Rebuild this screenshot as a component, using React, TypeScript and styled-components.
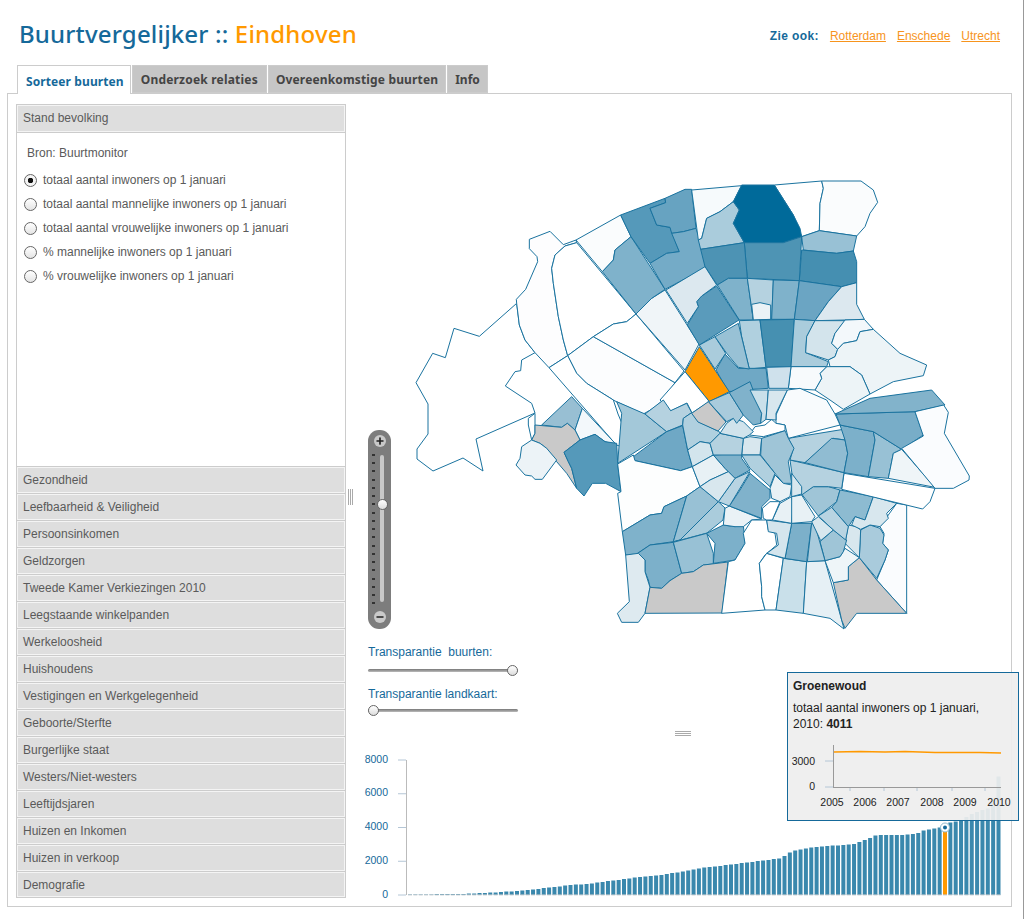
import React from "react";
import styled, { createGlobalStyle } from "styled-components";
import { Minus, Plus } from "lucide-react";

const BLUE = "#15699a";
const ORANGE = "#ff9900";

const GlobalStyle = createGlobalStyle`
  html, body {
    margin: 0;
    background: #fff;
    font-family: "Liberation Sans", Arial, sans-serif;
    font-size: 12px;
    color: #5a5a5a;
  }
`;

const Page = styled.div`
  width: 1023px;
  height: 919px;
  border-right: 1px solid #999;
  overflow: hidden;
`;

const Header = styled.header`
  display: flex;
  align-items: center;
  justify-content: space-between;
  height: 65px;
  padding: 0 23px 0 19px;
  box-sizing: border-box;
`;

const Title = styled.h1`
  margin: 1px 0 0;
  font-family: "Noto Sans", sans-serif;
  font-size: 24px;
  font-weight: 500;
  letter-spacing: 0.17px;
  color: ${BLUE};
`;

const City = styled.span`
  color: ${ORANGE};
`;

const SeeAlso = styled.nav`
  display: flex;
  gap: 11px;
  margin-top: 6px;
  color: ${BLUE};
  font-weight: bold;
`;

const SeeAlsoLabel = styled.span`
  letter-spacing: 0.4px;
`;

const CityLink = styled.a`
  color: #f7941d;
  font-weight: normal;
  text-decoration: underline;
`;

const Tabs = styled.div`
  display: flex;
  gap: 1px;
  height: 29px;
  padding-left: 17px;
  margin-bottom: -1px;
  position: relative;
  z-index: 1;
  font-family: "Noto Sans", sans-serif;
  font-size: 12px;
  font-weight: bold;
`;

const Tab = styled.div<{ $active?: boolean }>`
  display: flex;
  align-items: center;
  padding: ${({ $active }) => ($active ? "2px 6px 0 8px" : "0 8px")};
  box-sizing: border-box;
  height: ${({ $active }) => ($active ? "29px" : "28px")};
  letter-spacing: ${({ $active }) => ($active ? "0.1px" : "0.2px")};
  color: ${({ $active }) => ($active ? BLUE : "#444")};
  background: ${({ $active }) => ($active ? "#fff" : "#c6c6c6")};
  border: 1px solid #ccc;
  border-bottom: ${({ $active }) => ($active ? "none" : "1px solid #ccc")};
  &:nth-child(n + 3) {
    padding: 0 7px;
    letter-spacing: 0.15px;
  }
  &:last-child {
    letter-spacing: 0;
  }
`;

const Panel = styled.main`
  display: flex;
  width: 1005px;
  height: 814px;
  margin-left: 7px;
  padding: 10px 0 0 8px;
  box-sizing: border-box;
  border: 1px solid #ccc;
`;

const Accordion = styled.aside`
  width: 330px;
  flex: none;
`;

const Section = styled.div`
  display: flex;
  align-items: center;
  height: 27px;
  padding: 0 6px;
  box-sizing: border-box;
  border: 1px solid #ccc;
  border-bottom: none;
  background: #dedede;
  box-shadow: inset 0 0 0 1px #f4f4f4;
  &:last-child {
    border-bottom: 1px solid #ccc;
  }
`;

const OpenSection = styled(Section)`
  height: 28px;
  padding-bottom: 2px;
`;

const SectionBody = styled.div`
  height: 334px;
  padding: 13px 0 0 7px;
  box-sizing: border-box;
  border: 1px solid #ccc;
  border-bottom: none;
`;

const Source = styled.div`
  height: 14px;
  margin: 0 0 8px 3px;
  line-height: 14px;
`;

const RadioRow = styled.label`
  display: flex;
  align-items: center;
  gap: 6px;
  height: 24px;
`;

const RadioDot = styled.span<{ $checked?: boolean }>`
  width: 13px;
  height: 13px;
  box-sizing: border-box;
  border-radius: 50%;
  border: 1px solid #666;
  background: ${({ $checked }) =>
    $checked
      ? "radial-gradient(circle, #111 0 2.5px, #f4f4f4 3px)"
      : "linear-gradient(#fff, #e4e4e4)"};
`;

const Splitter = styled.div`
  width: 9px;
  flex: none;
  display: flex;
  align-items: center;
  justify-content: center;
  padding-bottom: 16px;
`;

const VGrip = styled.div`
  width: 5px;
  height: 16px;
  background: repeating-linear-gradient(90deg, #aaa 0 1px, #fff 1px 2px);
`;

const Right = styled.section`
  position: relative;
  flex: 1;
  min-width: 0;
`;

const MapArea = styled.div`
  position: relative;
  height: 541px;
`;

const MapSvg = styled.svg`
  display: block;
`;

const ZoomBar = styled.div`
  position: absolute;
  left: 13px;
  top: 326px;
  width: 23px;
  height: 199px;
  border-radius: 11px;
  background: #7d7d7d;
`;

const ZoomButton = styled.div<{ $bottom?: boolean }>`
  position: absolute;
  left: 6px;
  ${({ $bottom }) => ($bottom ? "bottom: 6px;" : "top: 5px;")}
  display: flex;
  align-items: center;
  justify-content: center;
  width: 12px;
  height: 12px;
  border-radius: 50%;
  background: #c9c9c9;
  color: #222;
`;

const ZoomTicks = styled.div`
  position: absolute;
  left: 4px;
  top: 24px;
  width: 3px;
  height: 150px;
  background: repeating-linear-gradient(#333 0 2px, transparent 2px 8.25px);
`;

const ZoomTrack = styled.div`
  position: absolute;
  left: 12px;
  top: 25px;
  width: 4px;
  height: 147px;
  border-radius: 2px;
  background: #c8c8c8;
`;

const Knob = styled.div`
  position: absolute;
  width: 11px;
  height: 11px;
  box-sizing: border-box;
  border-radius: 50%;
  border: 1px solid #666;
  background: linear-gradient(#fff, #ddd);
`;

const ZoomKnob = styled(Knob)`
  left: 8.5px;
  top: 69px;
`;

const Controls = styled.div`
  padding-left: 13px;
`;

const SliderLabel = styled.div`
  height: 14px;
  line-height: 14px;
  color: ${BLUE};
  white-space: pre;
`;

const Slider = styled.div`
  position: relative;
  width: 150px;
  height: 16px;
  margin: 4px 0 8px;
  &:last-child {
    margin: 2px 0 0;
  }
  &::before {
    content: "";
    position: absolute;
    left: 0;
    right: 0;
    top: 6px;
    height: 3px;
    border-radius: 2px;
    background: linear-gradient(#777, #bbb);
  }
`;

const SliderKnob = styled(Knob)<{ $end?: boolean }>`
  top: 2px;
  ${({ $end }) => ($end ? "right: 0;" : "left: 0;")}
`;

const HGripRow = styled.div`
  display: flex;
  justify-content: center;
  padding: 12px 0 10px 0;
`;

const HGrip = styled.div`
  width: 16px;
  height: 5px;
  background: repeating-linear-gradient(#aaa 0 1px, #fff 1px 2px);
`;

const Tooltip = styled.div`
  position: absolute;
  left: 432px;
  top: 568px;
  width: 232px;
  height: 149px;
  padding: 6px 5px 0;
  box-sizing: border-box;
  border: 1px solid ${BLUE};
  background: rgba(238, 238, 238, 0.93);
  color: #222;
`;

const TooltipName = styled.div`
  font-weight: bold;
  line-height: 14px;
  margin-bottom: 7px;
`;

const TooltipText = styled.div`
  line-height: 16px;
`;

const MiniChart = styled.svg`
  display: block;
  margin: 9px 0 0 -5px;
`;

const ChartSvg = styled.svg`
  display: block;
`;

// crop origins: the polygon points below were read off at 3x from these corners
const origins: Record<string, [number, number]> = {
  nw: [400, 170],
  n: [660, 170],
  sw: [460, 390],
  se: [700, 390],
  e: [900, 380],
};

const areas: [string, string, string][] = [
  // west
  ["nw", "#fff", "48,638 98,550 136,563 162,475 238,499 350,400 358,465 375,510 405,548 365,570 362,602 345,605 316,648 395,700 405,729 228,807 249,903 189,864 99,903 51,867 51,837 84,792 84,702"],
  ["nw", "#fdfdfe", "350,400 349,388 377,358 413,275 411,260 388,236 388,208 450,184 490,224 528,210 530,218 495,228 465,255 455,295 460,340 475,440 490,510 503,557 447,593 405,548 375,510 358,465"],
  ["nw", "#fff", "530,218 708,432 680,455 640,462 580,500 503,557 490,510 475,440 460,340 455,295 465,255 495,228"],
  ["nw", "#fcfdfe", "503,557 580,500 825,638 790,690 760,715 730,732 651,696 640,690 560,640 530,610"],
  ["nw", "#fff", "580,500 640,462 680,455 708,432 852,603 825,638"],
  ["nw", "#fff", "447,593 503,557 530,610 560,640 640,690 654,732 670,770 665,830 649,825 447,593"],
  ["nw", "#f0f5f8", "708,432 755,385 795,360 897,522 855,600"],
  ["nw", "#fafcfd", "528,210 662,135 693,200 645,240 640,270 607,305"],
  ["nw", "#7fb2cb", "607,305 640,270 645,240 693,200 795,358 755,385 708,432"],
  ["nw", "#5599ba", "662,135 795,85 797,98 750,115 770,165 810,172 838,245 800,250 750,280 693,200"],
  ["nw", "#67a3c1", "795,85 855,58 875,58 888,175 850,185 815,190 810,172 770,165 750,115 797,98"],
  ["nw", "#74abc7", "815,190 850,185 888,175 925,290 795,358 750,280 800,250 838,245"],
  // north
  ["n", "#f6fafc", "95,60 245,47 220,95 180,125 140,145 125,205 115,210"],
  ["n", "#aaccdc", "115,210 125,205 140,145 180,125 220,95 238,120 220,160 253,218 122,238"],
  ["n", "#fff", "343,45 485,33 490,55 480,100 478,182 425,200 400,135"],
  ["n", "#fafcfd", "485,33 603,33 640,60 653,97 630,130 615,170 590,198 478,182 480,100 490,55"],
  ["n", "#006a9a", "245,45 343,45 400,135 420,175 425,200 370,218 253,218 220,160 238,120 220,95"],
  ["n", "#98c1d5", "425,200 478,182 590,198 580,243 530,250 430,240"],
  ["n", "#458fb1", "425,240 530,250 580,243 590,275 590,338 545,350 418,332"],
  ["n", "#4e94b4", "253,218 370,218 425,200 418,332 262,325"],
  ["n", "#4d93b4", "122,238 253,218 262,325 205,325 172,345 135,290"],
  ["n", "#7fb2cb", "172,345 205,325 262,325 280,450 238,450"],
  ["n", "#b5d2e0", "262,325 340,330 335,448 280,450"],
  ["n", "#eaf2f6", "275,403 300,398 332,405 332,448 280,450"],
  ["n", "#7fb2cb", "340,330 418,332 403,448 335,448"],
  ["n", "#6ba5c3", "418,332 545,350 505,395 465,452 403,448"],
  ["n", "#dce8ef", "545,350 590,338 590,403 613,448 555,450 465,452 505,395"],
  ["n", "#b0d0df", "238,452 300,450 318,592 268,597 245,500"],
  ["n", "#4690b1", "300,450 403,448 393,590 318,592"],
  ["n", "#aaccdc", "403,448 465,452 440,500 437,548 505,575 500,590 393,590"],
  ["n", "#d3e4ec", "465,452 555,452 525,490 515,520 533,538 525,560 505,570 437,548 440,500"],
  ["n", "#f3f8fb", "555,450 613,448 640,478 600,485 590,512 550,520 533,538 515,520 525,490"],
  ["n", "#edf4f7", "640,478 720,550 800,585 790,617 700,635 630,672 605,615 570,590 510,590 505,570 525,560 533,538 550,520 590,512 600,485"],
  ["n", "#edf4f7", "500,590 570,590 605,615 630,672 550,718 510,690 465,660 485,625 480,610"],
  ["n", "#f7fafc", "393,590 500,590 480,610 485,625 465,660 385,655"],
  ["n", "#cfe1ec", "320,592 393,590 385,655 327,655"],
  ["n", "#6fa8c5", "168,600 195,552 235,595 318,595 325,655 275,658 205,665"],
  ["n", "#aaccdc", "118,525 165,500 197,550 165,597"],
  ["n", "#98c1d5", "165,500 235,460 268,597 235,592 200,550"],
  ["n", "#5a9bbb", "82,465 115,410 110,395 125,378 170,348 237,450 118,525"],
  ["n", "#dce8ef", "18,360 135,290 170,345 125,378 110,395 115,410 82,460"],
  ["n", ORANGE, "118,530 208,665 148,695 75,605"],
  ["n", "#fff", "45,639 75,605 148,695 96,729 81,699 33,723 0,690"],
  // south west
  ["sw", "#fff", "205,85 225,70 225,105 225,130 215,150 205,105"],
  ["sw", "#98bfd3", "245,105 335,20 367,55 345,120 322,100 305,112"],
  ["sw", "#f3f8fb", "367,55 470,165 435,155 405,133 360,150 345,120"],
  ["sw", "#c9c9c9", "225,105 305,112 322,100 345,120 360,150 312,187 325,215 335,235 350,295 320,250 290,215 260,175 240,160 215,150 225,130"],
  ["sw", "#ecf3f7", "215,150 185,170 180,205 168,225 195,255 215,258 225,268 247,268 290,210 260,175 240,160"],
  ["sw", "#5599ba", "312,187 360,150 405,133 435,155 470,160 473,220 483,305 437,280 397,280 372,318 350,295 335,235 325,215"],
  ["sw", "#a3c8d9", "470,35 485,70 473,220 620,125 555,72"],
  ["sw", "#b5d2e0", "555,72 610,30 632,62 680,40 695,68 670,85 668,105 620,125"],
  ["sw", "#6fa8c5", "520,200 620,125 668,107 683,180 697,230 662,242 525,212"],
  ["sw", "#fdfefe", "473,222 520,195 525,212 662,242 697,230 720,290 680,318 612,350 605,370 570,375 487,425 473,310 483,305"],
  ["sw", "#7fb2cb", "487,425 570,375 605,370 612,350 680,318 640,455 570,465 530,492 497,495"],
  ["sw", "#98c1d5", "640,455 680,318 720,290 775,335 660,450"],
  ["sw", "#aaccdc", "660,450 775,335 795,354 789,390 741,429 640,456"],
  ["sw", "#7cb0ca", "530,492 570,465 640,457 665,550 630,572 605,595 570,592 565,570 555,545 555,510"],
  ["sw", "#98c1d5", "640,457 740,430 760,490 760,522 730,525 700,545 665,550"],
  ["sw", "#deeaf0", "497,495 535,490 555,510 555,545 570,592 555,670 535,697 485,697 472,670 508,635"],
  ["sw", "#c9c9c9", "570,592 605,595 630,572 665,550 700,545 730,525 804,516 786,669 555,670"],
  ["sw", "#b0d0df", "668,105 670,85 695,68 715,95 778,125 780,130 750,160 720,155 683,180"],
  ["sw", "#d3e5ed", "683,180 720,155 750,160 760,195 697,230"],
  ["sw", "#e8f1f5", "697,230 760,195 795,235 805,245 750,270 720,290"],
  // south east
  ["se", "#7cb0ca", "20,430 70,405 105,410 130,405 135,460 105,510 40,520 45,460"],
  ["se", "#eaf2f6", "70,405 75,355 88,348 185,387 155,390 130,410 105,410"],
  ["se", "#fff", "85,515 65,670 195,660 185,620 185,590 178,520 195,495 230,465 225,430 205,420 200,390 155,390 130,430 135,460 105,510"],
  ["se", "#fff", "200,490 250,505 228,660 195,660 185,620 185,590 178,520"],
  ["se", "#c9e0ea", "250,505 320,515 310,670 228,660"],
  ["se", "#e6f0f5", "320,515 375,512 425,690 432,717 390,685 310,670"],
  ["se", "#fafcfe", "530,570 555,510 565,480 548,460 552,430 540,410 590,340 620,345 620,670"],
  ["se", "#c9c9c9", "400,578 445,570 445,530 478,503 530,570 620,670 470,670 435,715 425,690"],
  ["se", "#a9cbdc", "478,503 482,420 510,405 540,415 552,435 548,460 565,480 555,510 530,565"],
  ["se", "#d8e7ee", "445,405 470,410 482,420 478,503 435,460"],
  ["se", "#eef5f8", "375,512 420,500 435,475 478,503 445,530 445,570 400,578"],
  ["se", "#9fc5d7", "360,455 400,420 440,450 430,485 420,500 375,512"],
  ["se", "#7cb0ca", "255,505 275,400 335,400 320,515"],
  ["se", "#a9cbdc", "335,400 345,405 375,512 322,515"],
  ["se", "#d4e5ed", "200,390 275,400 255,505 200,490 235,465 230,430 205,425"],
  ["se", "#e8f1f5", "217,390 240,340 275,320 280,345 275,400"],
  ["se", "#fff", "187,355 210,335 240,335 217,390 200,390 190,385"],
  ["se", "#e8f1f5", "275,320 305,315 345,380 335,395 275,400"],
  ["se", "#9fc5d7", "305,312 340,290 385,290 420,300 410,335 355,378"],
  ["se", "#8dbbd1", "420,300 520,320 495,390 465,380 445,410 395,352 410,335"],
  ["se", "#d8e7ee", "520,320 590,340 560,370 565,385 540,410 510,405 482,418 455,405 465,380 495,390"],
  ["se", "#b8d4e2", "355,378 395,352 445,410 437,450 400,420"],
  ["se", "#d8e7ee", "335,395 355,380 400,420 362,452"],
  ["se", "#fff", "432,250 705,295 690,335 668,357 425,298"],
  ["se", "#b5d2e0", "270,210 432,248 425,295 385,290 340,290 305,315 280,280"],
  ["se", "#b5d2e0", "265,145 430,118 435,150 400,145 315,218 270,210 280,175"],
  ["se", "#90bcd2", "315,218 395,145 435,150 443,190 432,248"],
  ["se", "#7cb0ca", "420,105 520,125 525,150 505,260 432,248 443,190 435,150"],
  ["se", "#98c1d5", "520,125 605,178 580,190 565,265 505,260 525,150"],
  ["se", "#78adc8", "408,72 645,65 670,135 605,178 520,125 420,105"],
  ["se", "#82b3cb", "405,72 510,25 695,0 735,45 645,65"],
  ["se", "#eff5f8", "565,265 580,190 605,178 705,292"],
  ["se", "#f8fbfd", "228,100 228,75 262,0 300,-5 380,30 405,72 420,105 265,145 255,105"],
  ["se", "#fff", "148,135 165,110 195,105 215,88 228,100 255,105 255,122 190,140"],
  ["se", "#d8e7ee", "130,145 150,140 185,145 180,195 125,195"],
  ["se", "#9fc5d7", "185,145 255,122 265,145 282,175 265,215 275,280 250,280 225,250 182,195"],
  ["se", "#b0d0df", "125,195 180,195 225,250 210,290 150,235"],
  ["se", "#7fb2cb", "40,195 125,190 125,205 150,240 105,265 75,235"],
  ["se", "#e8f1f5", "225,255 250,280 275,285 270,320 240,335 215,325 210,295"],
  ["se", "#d8e7ee", "275,250 305,290 305,312 275,320 275,285"],
  ["se", "#80b2cb", "150,250 210,300 210,325 185,350 185,385 88,348 120,300"],
  ["se", "#b8d4e2", "55,335 105,265 150,245 88,348"],
  ["se", "#d8e7ee", "0,290 30,270 85,245 105,265 55,335"],
  ["se", "#b5d2e0", "60,130 130,145 125,195 40,195 30,160"],
  ["se", "#d0e3ec", "80,100 100,85 130,95 160,125 148,135 130,145 60,130"],
  ["se", "#a9cbdc", "25,35 88,8 130,75 110,100 100,85 80,95"],
  ["se", "#80b2cb", "88,8 150,-25 185,70 182,100 160,105 130,75"],
  ["se", "#c9e0ea", "150,0 205,0 198,88 182,100 185,70"],
  ["se", "#d8e7ee", "205,0 262,0 228,70 228,90 198,88"],
  ["sw", "#c9c9c9", "695,70 745,35 798,96 774,123 714,96"],
  // east
  ["e", "#fafcfe", "131,75 145,97 133,160 208,288 207,300 160,325 105,325 5,205 70,168 45,95"],
];

const MapDrawing = () => (
  <MapSvg width={655} height={541} viewBox="355 104 655 541" fill="none">
    {areas.map(([crop, fill, points], i) => (
      <g key={i} transform={`translate(${origins[crop][0]} ${origins[crop][1]}) scale(${1 / 3})`}>
        <polygon
          points={points}
          fill={fill}
          stroke="#1a739f"
          strokeWidth={1}
          strokeLinejoin="round"
          vectorEffect="non-scaling-stroke"
        />
      </g>
    ))}
  </MapSvg>
);

// [x, bar height] as read from the reference, bars are interpolated between them
const heightStops = [
  [408, 0.5], [460, 1], [470, 1.5], [500, 3], [527, 5], [560, 9], [593, 12], [630, 17], [660, 20],
  [700, 27], [750, 33], [780, 37], [790, 44], [813, 48], [853, 51], [875, 60], [903, 60], [917, 62],
  [923, 65], [940, 68], [947, 72], [960, 75], [967, 80], [977, 84], [987, 87], [992, 95], [997, 121],
];

const barHeight = (x: number) => {
  for (let i = 1; i < heightStops.length; i++) {
    const [x0, h0] = heightStops[i - 1];
    const [x1, h1] = heightStops[i];
    if (x <= x1) return Math.round((h0 + ((x - x0) / (x1 - x0)) * (h1 - h0)) * 2) / 2;
  }
  return 121;
};

const bars = Array.from({ length: 111 }, (_, i) => 408 + i * 5.35);

const BarChart = () => (
  <ChartSvg width={655} height={157} viewBox="355 745 655 157">
    {[0, 2000, 4000, 6000, 8000].map((v) => {
      const y = 894 - (v / 8000) * 135;
      return (
        <g key={v}>
          <line x1={398} x2={406} y1={y} y2={y} stroke="#b4c6d6" />
          <text x={388} y={y + 2.5} textAnchor="end" fontSize={10.5} fill={BLUE}>
            {v}
          </text>
        </g>
      );
    })}
    <line x1={406.5} x2={406.5} y1={759} y2={894} stroke="#bbb" />
    {bars.map((x, i) => {
      const h = barHeight(x);
      return (
        <g key={i}>
          <rect x={x} y={894 - h} width={4} height={h} fill={i === 100 ? ORANGE : "#3a88ad"} />
          <rect x={x} y={893.4} width={4} height={1} fill="#c4c9cc" />
        </g>
      );
    })}
    <circle cx={945} cy={826.5} r={4.5} fill="#fff" stroke="#8fb9cf" />
    <circle cx={945} cy={826.5} r={2} fill={BLUE} />
  </ChartSvg>
);

const MiniLine = () => (
  <MiniChart width={230} height={72} viewBox="788 741 230 72">
    <line x1={825} x2={833} y1={761} y2={761} stroke="#b4c6d6" />
    <line x1={825} x2={833} y1={787} y2={787} stroke="#b4c6d6" />
    {[850, 884, 917, 952, 985].map((x) => (
      <line key={x} x1={x} x2={x} y1={787} y2={791} stroke="#b4c6d6" />
    ))}
    <line x1={833.5} x2={833.5} y1={745} y2={787.5} stroke="#999" />
    <line x1={833} x2={1001} y1={787.5} y2={787.5} stroke="#999" />
    <polyline
      points="834,752 860,751.5 885,752 905,751.5 935,752.5 960,752.5 980,752.5 1001,753"
      fill="none"
      stroke={ORANGE}
      strokeWidth={1.6}
    />
    <text x={815} y={765} textAnchor="end" fontSize={10.5} fill="#222">3000</text>
    <text x={815} y={789.5} textAnchor="end" fontSize={10.5} fill="#222">0</text>
    {[[832, 2005], [865, 2006], [898, 2007], [932, 2008], [965, 2009], [999, 2010]].map(([x, year]) => (
      <text key={year} x={x} y={806} textAnchor="middle" fontSize={10.5} fill="#222">
        {year}
      </text>
    ))}
  </MiniChart>
);

const indicators = [
  "totaal aantal inwoners op 1 januari",
  "totaal aantal mannelijke inwoners op 1 januari",
  "totaal aantal vrouwelijke inwoners op 1 januari",
  "% mannelijke inwoners op 1 januari",
  "% vrouwelijke inwoners op 1 januari",
];

const sections = [
  "Gezondheid",
  "Leefbaarheid & Veiligheid",
  "Persoonsinkomen",
  "Geldzorgen",
  "Tweede Kamer Verkiezingen 2010",
  "Leegstaande winkelpanden",
  "Werkeloosheid",
  "Huishoudens",
  "Vestigingen en Werkgelegenheid",
  "Geboorte/Sterfte",
  "Burgerlijke staat",
  "Westers/Niet-westers",
  "Leeftijdsjaren",
  "Huizen en Inkomen",
  "Huizen in verkoop",
  "Demografie",
];

export default function App() {
  return (
    <Page>
      <GlobalStyle />
      <Header>
        <Title>
          Buurtvergelijker :: <City>Eindhoven</City>
        </Title>
        <SeeAlso>
          <SeeAlsoLabel>Zie ook:</SeeAlsoLabel>
          <CityLink href="#">Rotterdam</CityLink>
          <CityLink href="#">Enschede</CityLink>
          <CityLink href="#">Utrecht</CityLink>
        </SeeAlso>
      </Header>
      <Tabs>
        <Tab $active>Sorteer buurten</Tab>
        <Tab>Onderzoek relaties</Tab>
        <Tab>Overeenkomstige buurten</Tab>
        <Tab>Info</Tab>
      </Tabs>
      <Panel>
        <Accordion>
          <OpenSection>Stand bevolking</OpenSection>
          <SectionBody>
            <Source>Bron: Buurtmonitor</Source>
            {indicators.map((label, i) => (
              <RadioRow key={label}>
                <RadioDot $checked={i === 0} />
                {label}
              </RadioRow>
            ))}
          </SectionBody>
          {sections.map((s) => (
            <Section key={s}>{s}</Section>
          ))}
        </Accordion>
        <Splitter>
          <VGrip />
        </Splitter>
        <Right>
          <MapArea>
            <MapDrawing />
            <ZoomBar>
              <ZoomButton>
                <Plus size={10} strokeWidth={4} />
              </ZoomButton>
              <ZoomTicks />
              <ZoomTrack />
              <ZoomKnob />
              <ZoomButton $bottom>
                <Minus size={10} strokeWidth={4} />
              </ZoomButton>
            </ZoomBar>
          </MapArea>
          <Controls>
            <SliderLabel>Transparantie  buurten:</SliderLabel>
            <Slider>
              <SliderKnob $end />
            </Slider>
            <SliderLabel>Transparantie landkaart:</SliderLabel>
            <Slider>
              <SliderKnob />
            </Slider>
          </Controls>
          <HGripRow>
            <HGrip />
          </HGripRow>
          <BarChart />
          <Tooltip>
            <TooltipName>Groenewoud</TooltipName>
            <TooltipText>
              totaal aantal inwoners op 1 januari,
              <br />
              2010: <b>4011</b>
            </TooltipText>
            <MiniLine />
          </Tooltip>
        </Right>
      </Panel>
    </Page>
  );
}
